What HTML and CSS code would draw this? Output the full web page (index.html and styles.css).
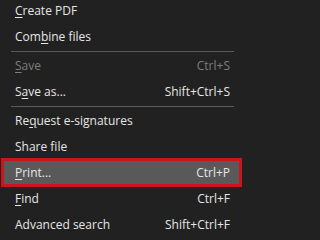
FILE: index.html
```html
<!DOCTYPE html>
<html>
<head>
<meta charset="utf-8">
<link rel="stylesheet" href="styles.css">
</head>
<body>
<div class="menu">
  <div class="item"><span class="label"><u>C</u>reate PDF</span></div>
  <div class="item"><span class="label">Com<u>b</u>ine files</span></div>
  <div class="sep"></div>
  <div class="item disabled"><span class="label"><u>S</u>ave</span><span class="key">Ctrl+S</span></div>
  <div class="item"><span class="label">S<u>a</u>ve as...</span><span class="key">Shift+Ctrl+S</span></div>
  <div class="sep"></div>
  <div class="item"><span class="label">Re<u>q</u>uest e-signatures</span></div>
  <div class="item"><span class="label">Share file</span></div>
  <div class="item highlight"><span class="label"><u>P</u>rint...</span><span class="key">Ctrl+P</span></div>
  <div class="item"><span class="label"><u>F</u>ind</span><span class="key">Ctrl+F</span></div>
  <div class="item"><span class="label">Advanced search</span><span class="key">Shift+Ctrl+F</span></div>
</div>
</body>
</html>
```

FILE: styles.css
```css
html, body {
  margin: 0;
  padding: 0;
  background: #212121;
  overflow: hidden;
}

.menu {
  width: 245px;
  margin-top: -2px;
  font-family: "Open Sans", "Noto Sans", sans-serif;
  font-size: 12px;
  color: #e6e6e6;
}

.item {
  display: flex;
  justify-content: space-between;
  align-items: center;
  height: 26px;
  line-height: 26px;
  padding: 0 15px;
  white-space: nowrap;
}

.item u {
  text-decoration-thickness: 1px;
  text-underline-offset: 2px;
}

.item.disabled {
  color: #7d7d7d;
}

.sep {
  height: 1px;
  margin: 1px 11px;
  background: #5a5a5a;
}

.item.highlight {
  position: relative;
  margin: 0 3px 0 1px;
  padding: 0 12px 0 14px;
  background: #595959;
}

.item.highlight::after {
  content: "";
  position: absolute;
  top: -2px;
  bottom: -1px;
  left: 0;
  right: 0;
  border: 3px solid #cc141c;
}
```
